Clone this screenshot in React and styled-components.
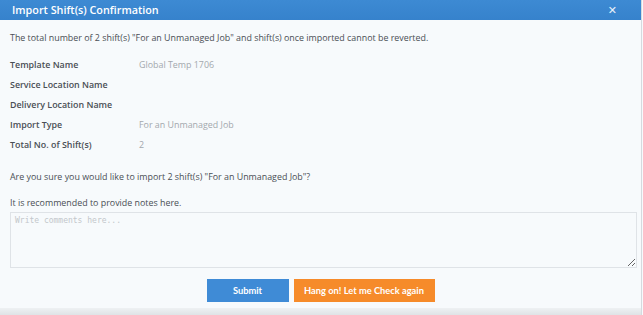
import React from "react";
import styled, { createGlobalStyle } from "styled-components";

const GlobalStyle = createGlobalStyle`
  html, body {
    margin: 0;
    padding: 0;
    background: #f7fafc;
  }
`;

const Modal = styled.div`
  width: 642px;
  height: 315px;
  box-sizing: border-box;
  border-right: 1px solid #d5dadf;
  background: #f7fafc;
  font-family: "Open Sans", sans-serif;
  display: flex;
  flex-direction: column;
`;

const Header = styled.div`
  height: 20px;
  background: linear-gradient(#3d8ad3, #3682cc);
  display: flex;
  align-items: center;
  justify-content: space-between;
  padding: 0 24px 0 12px;
  color: #fff;
`;

const Title = styled.div`
  font-size: 10.8px;
  font-weight: 600;
  line-height: 20px;
`;

const Close = styled.span`
  font-family: "DejaVu Sans", sans-serif;
  font-size: 11px;
  font-weight: bold;
  color: #e8f1fa;
`;

const Body = styled.div`
  flex: 1;
  padding: 0 5px 0 10px;
  display: flex;
  flex-direction: column;
`;

const Text = styled.p`
  margin: 0;
  font-size: 8.9px;
  line-height: 12px;
  color: #4a4f55;
  margin-top: ${(p) => p.top || "0"};
`;

const Details = styled.div`
  display: grid;
  grid-template-columns: 129px 1fr;
  grid-auto-rows: 20px;
  margin-top: 10px;
  align-items: center;
`;

const Label = styled.div`
  font-size: 8.9px;
  font-weight: 600;
  color: #4a4f55;
`;

const Value = styled.div`
  font-size: 8.9px;
  color: #a3a8ad;
`;

const Notes = styled.textarea`
  margin-top: 3px;
  width: 627px;
  height: 56px;
  box-sizing: border-box;
  border: 1px solid #dfe3e7;
  background: #f7fafc;
  padding: 3px 4px;
  font-family: "DejaVu Sans Mono", monospace;
  font-size: 8px;
  color: #555;
  &::placeholder {
    color: #c3c7cb;
  }
`;

const Actions = styled.div`
  display: flex;
  justify-content: center;
  gap: 5px;
  margin-top: 11px;
  padding-right: 5px;
`;

const Button = styled.button`
  height: 23px;
  width: ${(p) => p.w};
  padding: 0;
  border: none;
  background: ${(p) => p.bg};
  color: #fff;
  font-family: "Lato", sans-serif;
  font-weight: 700;
  font-size: 9.3px;
`;

const Footer = styled.div`
  height: 7px;
  background: linear-gradient(#eef1f3, #dfe3e6);
`;

export default function App() {
  return (
    <>
      <GlobalStyle />
      <Modal>
        <Header>
          <Title>Import Shift(s) Confirmation</Title>
          <Close>✕</Close>
        </Header>
        <Body>
          <Text top="12px">
            The total number of 2 shift(s) "For an Unmanaged Job" and shift(s)
            once imported cannot be reverted.
          </Text>
          <Details>
            <Label>Template Name</Label>
            <Value>Global Temp 1706</Value>
            <Label>Service Location Name</Label>
            <Value></Value>
            <Label>Delivery Location Name</Label>
            <Value></Value>
            <Label>Import Type</Label>
            <Value>For an Unmanaged Job</Value>
            <Label>Total No. of Shift(s)</Label>
            <Value>2</Value>
          </Details>
          <Text top="17px">
            Are you sure you would like to import 2 shift(s) "For an Unmanaged
            Job"?
          </Text>
          <Text top="14px">It is recommended to provide notes here.</Text>
          <Notes placeholder="Write comments here..." />
          <Actions>
            <Button bg="#3f8bd6" w="82px">
              Submit
            </Button>
            <Button bg="#f68b2a" w="141px">
              Hang on! Let me Check again
            </Button>
          </Actions>
        </Body>
        <Footer />
      </Modal>
    </>
  );
}
